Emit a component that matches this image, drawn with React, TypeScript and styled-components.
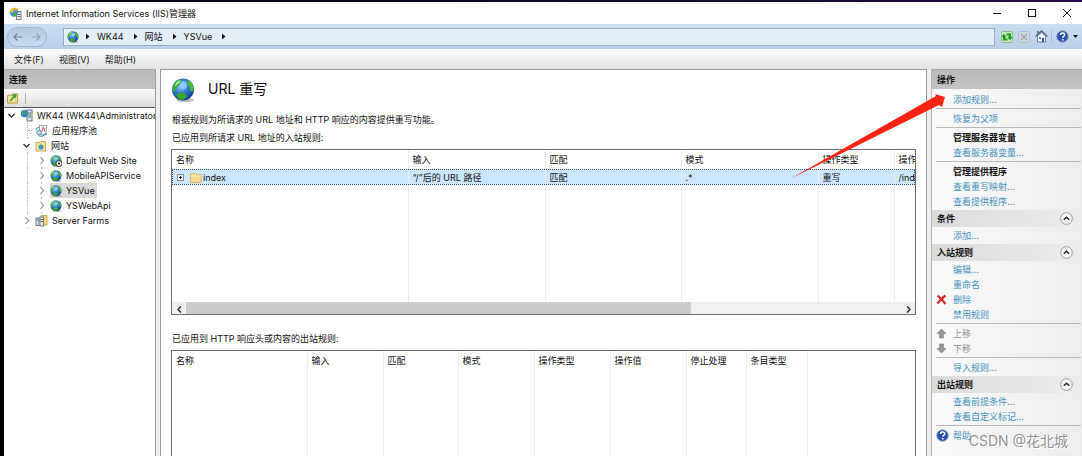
import React from 'react';
import styled, { createGlobalStyle, css } from 'styled-components';

const GlobalStyle = createGlobalStyle`
  *, *::before, *::after { box-sizing: border-box; }
  html, body, #root { height: 100%; }
  body {
    margin: 0;
    overflow: hidden;
    color: #111;
    font: 9px/15px Inter, "Noto Sans CJK SC", sans-serif;
  }
  button, input {
    margin: 0;
    padding: 0;
    border: 0;
    background: none;
    color: inherit;
    font: inherit;
  }
  svg { display: block; flex: none; }
  ul { margin: 0; padding: 0; list-style: none; }
  h1, h2, h3, p { margin: 0; font: inherit; }
`;

const Desktop = styled.div`
  height: 100vh;
  padding: 2px 0 0 4px;
  background: linear-gradient(90deg, #05050c, #170b35 70%, #240a4a) top / 100% 2px no-repeat #000;
`;

const Window = styled.div`
  position: relative;
  display: flex;
  flex-direction: column;
  height: 100%;
  background: #f0eff0;
`;

const TitleBar = styled.header`
  display: flex;
  align-items: center;
  height: 22px;
  padding: 0 8px 0 5px;
  gap: 4px;
  background: #fff;
`;

const WindowTitle = styled.h1`
  flex: 1;
  font-size: 9px;
`;

const WindowButtons = styled.div`
  display: flex;
  gap: 21px;
`;

const IconButton = styled.button`
  display: flex;
  align-items: center;
  justify-content: center;
  flex: none;
  width: 14px;
  height: 14px;
`;

const AddressBar = styled.nav`
  display: flex;
  align-items: center;
  height: 25px;
  padding: 0 3px;
  background: linear-gradient(#cbdef1, #b9d0ea);
`;

const History = styled.div`
  display: flex;
  align-items: center;
  justify-content: space-between;
  width: 40px;
  height: 20px;
  padding: 0 3px;
  border: 1px solid #a3b7cc;
  border-radius: 10px;
  background: linear-gradient(#b3c8de, #cadbed);
`;

const Crumbs = styled.div`
  display: flex;
  align-items: center;
  flex: 1;
  height: 18px;
  margin: 0 5px 0 16px;
  padding: 0 3px;
  border: 1px solid #98aec4;
  background: #e4eef9;
`;

const CrumbRoot = styled.button`
  padding-right: 6px;
`;

const Crumb = styled.button`
  padding: 0 9px 0 7px;
`;

const BarTools = styled.div`
  display: flex;
  align-items: center;
  gap: 3px;
`;

const ToolDivider = styled.span`
  width: 1px;
  height: 14px;
  background: #a9bfd6;
`;

const MenuBar = styled.nav`
  display: flex;
  align-items: center;
  height: 20px;
  padding: 0 10px;
  gap: 15px;
  background: linear-gradient(#fdfdfd, #e3e2e3);
`;

const Workspace = styled.div`
  display: flex;
  flex: 1;
  min-height: 0;
  gap: 4px;
`;

const SidePanel = styled.aside<{ $side: 'left' | 'right' }>`
  flex: none;
  width: ${p => (p.$side === 'left' ? 152 : 151)}px;
  overflow: hidden;
  border-top: 1px solid #a9a8a9;
  ${p =>
    p.$side === 'left'
      ? css`
          border-right: 1px solid #9b9a9b;
          background: #fff;
        `
      : css`
          border-left: 1px solid #b5b4b5;
          background: linear-gradient(90deg, #fafafa, #eeedee);
        `}
`;

const PanelHeading = styled.h2`
  height: 19px;
  padding: 2px 5px;
  background: linear-gradient(#bab8b9, #c4c2c3);
  font-weight: 700;
`;

const TreeToolbar = styled.div`
  display: flex;
  align-items: center;
  height: 19px;
  padding: 0 2px;
  gap: 5px;
  border-bottom: 1px solid #55535c;
  background: linear-gradient(#fbfbfb, #dedddd);
`;

const ToolbarMark = styled.span`
  width: 1px;
  height: 11px;
  background: #b7b29e;
`;

const Tree = styled.ul`
  padding: 0;
`;

const guide = 'repeating-linear-gradient(#b5b5b5 0 1px, transparent 1px 2px)';

const TreeRow = styled.li<{ $depth: number }>`
  display: flex;
  align-items: center;
  height: 15px;
  padding-left: ${p => 3 + p.$depth * 15}px;
  gap: 3px;
  white-space: nowrap;
  background-image: ${p => (p.$depth === 0 ? 'none' : p.$depth === 1 ? guide : `${guide}, ${guide}`)};
  background-position: 23px 0, 37px 0;
  background-size: 1px 100%;
  background-repeat: no-repeat;
`;

const TreeToggle = styled.button`
  display: flex;
  align-items: center;
  flex: none;
  width: 10px;
  height: 11px;
  background: #fff;
`;

const TreeSpacer = styled.span`
  flex: none;
  width: 4px;
  height: 1px;
  margin-left: 6px;
  border-top: 1px dotted #999;
`;

const TreeLabel = styled.button<{ $selected?: boolean }>`
  display: flex;
  align-items: center;
  padding-right: 2px;
  gap: 4px;
  background: ${p => (p.$selected ? '#d9d9d9' : 'none')};
`;

const Main = styled.main`
  display: flex;
  flex-direction: column;
  flex: 1;
  min-width: 0;
  padding: 8px 10px 0;
  border: 1px solid #9b9a9b;
  border-bottom: 0;
  background: #fff;
`;

const PageHeading = styled.div`
  display: flex;
  align-items: center;
  height: 24px;
  margin-bottom: 10px;
  gap: 13px;
`;

const PageTitle = styled.h2`
  padding-bottom: 2px;
  font-size: 14px;
  line-height: 20px;
`;

const Note = styled.p`
  margin-bottom: 3px;
  padding-left: 1px;
`;

const ListLabel = styled.h3<{ $spaced?: boolean }>`
  margin: ${p => (p.$spaced ? 16 : 0)}px 0 4px;
  padding-left: 1px;
`;

const ListFrame = styled.div<{ $grow?: boolean }>`
  overflow: hidden;
  flex: ${p => (p.$grow ? '1' : 'none')};
  border: 1px solid #6c6b6d;
  ${p => p.$grow && 'border-bottom: 0;'}
`;

const Grid = styled.table`
  width: 100%;
  border-collapse: collapse;
  table-layout: fixed;
  th, td {
    padding: 0 4px;
    border-right: 1px solid #e6eff2;
    font-weight: 400;
    text-align: left;
    white-space: nowrap;
    overflow: hidden;
  }
  th:last-child, td:last-child { border-right: 0; }
  th { height: 19px; }
`;

const SelectedRow = styled.tr`
  height: 16px;
  background: #cce7fd;
  outline: 1px dotted #3f5262;
  outline-offset: -1px;
`;

const NameCell = styled.div`
  display: flex;
  align-items: center;
  gap: 1px;
`;

const ExpandButton = styled(IconButton)`
  width: 9px;
  margin-right: 4px;
`;

const Filler = styled.tr<{ $height: number }>`
  height: ${p => p.$height}px;
`;

const ScrollBar = styled.div`
  display: flex;
  height: 12px;
  background: #f0f0f0;
`;

const ScrollThumb = styled.div`
  flex: 12;
  background: #cbcbcb;
`;

const ScrollTrack = styled.div`
  flex: 5;
`;

const ActionsBody = styled.div`
  padding-top: 3px;
`;

const ActionRow = styled.div`
  display: flex;
  align-items: center;
  height: 15px;
  padding-left: 4px;
`;

const ActionIcon = styled.span`
  flex: none;
  width: 17px;
`;

const ActionLink = styled.a<{ $disabled?: boolean }>`
  color: ${p => (p.$disabled ? '#939393' : '#3c93bd')};
  text-decoration: none;
`;

const ActionCaption = styled.h3`
  font-weight: 700;
`;

const Rule = styled.hr`
  height: 1px;
  margin: 1px 1px 2px 4px;
  border: 0;
  background: #b9b8b9;
`;

const SectionHeading = styled.div`
  display: flex;
  align-items: center;
  justify-content: space-between;
  height: 17px;
  margin: 1px 0;
  padding: 0 9px 0 5px;
  background: linear-gradient(90deg, #dcdbdc, #ededed);
  h3 { font-weight: 700; }
`;

const Pointer = styled.svg`
  position: absolute;
  top: 90px;
  right: 132px;
  pointer-events: none;
`;

const Watermark = styled.div`
  position: absolute;
  right: 14px;
  bottom: 5px;
  color: rgba(120, 120, 120, 0.8);
  font-size: 14px;
  line-height: 20px;
  text-shadow: 1px 1px 0 #fff;
  pointer-events: none;
`;

const Globe = ({ size = 12, children }: { size?: number; children?: React.ReactNode }) => (
  <svg width={size} height={size} viewBox="0 0 24 24" aria-hidden="true">
    <defs>
      <radialGradient id="sea" cx="40%" cy="35%" r="70%">
        <stop offset="0" stopColor="#8fd0fa" />
        <stop offset="0.45" stopColor="#2f7fd6" />
        <stop offset="1" stopColor="#123a86" />
      </radialGradient>
    </defs>
    <ellipse cx="14" cy="22" rx="9" ry="2" fill="#888" opacity="0.5" />
    <circle cx="12" cy="11.5" r="11" fill="url(#sea)" />
    <path d="M1.500 11C1.500 6 5 2 9 1.200L11.500 2 9 4 8.500 7 6 8.500 5 11.500 3 14z" fill="#3fae35" />
    <path d="M17 2c3.500 1.500 5.500 5 5.800 9L21 14l-2-2-.5-3.500L16 6.500z" fill="#46b93a" />
    <path d="M5.500 16l4.500-1.500 5 1.500 1 2.500-3 3-4 .5-3-3z" fill="#3aa52f" />
    <path d="M5 5l3-2.500 2 .5-3 3-3 2z" fill="#b4ea8c" />
    <ellipse cx="13" cy="7" rx="3" ry="4" fill="#c9ecff" opacity="0.5" />
    {children}
  </svg>
);

const ServerIcon = () => (
  <svg width="13" height="13" viewBox="0 0 13 13" aria-hidden="true">
    <rect x="7" y="1" width="5" height="11" fill="#dfe4ea" stroke="#6b7684" />
    <path d="M8 4h3M8 6h3M8 8h3" stroke="#5a6573" />
    <circle cx="4.5" cy="4.5" r="3.7" fill="#2f83d6" />
    <path d="M1.500 3.500 4 1l1 2-2 3zM5 5l3-1-1 3z" fill="#45b03a" />
  </svg>
);

const AppIcon = () => (
  <svg width="13" height="13" viewBox="0 0 13 13" aria-hidden="true">
    <rect x="7.500" y="4.500" width="4.500" height="8" fill="#e4e6e8" stroke="#7b8590" />
    <path d="M8.500 7.500h3M8.500 9.500h3" stroke="#66707c" />
    <circle cx="5" cy="5.500" r="4.200" fill="#3b92dd" />
    <path d="M.5 4.500 3 1l3-.5L5 4 3 6z" fill="#f4c430" />
    <path d="M6 .8 9.500 2 8 4 5.500 3z" fill="#e7a51c" />
    <path d="M4 7l4-2-1 4-2 .5z" fill="#49a83c" />
  </svg>
);

const PoolIcon = () => (
  <svg width="13" height="13" viewBox="0 0 13 13" aria-hidden="true">
    <rect x="4.500" y="1.500" width="7" height="9" fill="#eef2f6" stroke="#a3adb8" />
    <path d="M6.500 8 8.500 3 10 7.500" fill="none" stroke="#d5473f" />
    <path d="M1 6c.5-2 2.500-3 4-2.500M11 9c-1 3-5 4-8 2.500" fill="none" stroke="#5f93c8" strokeWidth="1.200" />
    <circle cx="4" cy="8.500" r="2.300" fill="#bcd7ee" stroke="#6d8fb0" />
  </svg>
);

const SitesIcon = () => (
  <svg width="12" height="12" viewBox="0 0 12 12" aria-hidden="true">
    <path d="M1 2.500h4l1-1h4.500V11H1z" fill="#f7e3a0" stroke="#cdaa55" />
    <circle cx="6" cy="7" r="2.600" fill="#3c8fd9" />
    <path d="M4 6l2-1.500.5 1.500L5 8zM6.500 7.500l1.500-.5-.5 1.500z" fill="#47b33a" />
  </svg>
);

const FarmIcon = () => (
  <svg width="13" height="13" viewBox="0 0 13 13" aria-hidden="true">
    <path d="M6 1.500h6v9.500H6z" fill="#f2d577" stroke="#cbaa55" />
    <rect x="1" y="4" width="3" height="7.500" fill="#dde2e7" stroke="#6e7883" />
    <rect x="5" y="3" width="3.500" height="9" fill="#e9ecef" stroke="#6e7883" />
    <path d="M1.500 6h2M5.500 5.500h2.500M5.500 7.500h2.500" stroke="#55606c" />
  </svg>
);

const FolderIcon = () => (
  <svg width="12" height="11" viewBox="0 0 12 11" aria-hidden="true">
    <path d="M.5 1.500H5l1 1h5v8H.5z" fill="#f8dc90" stroke="#dcb463" />
    <path d="M1 4h9.500" stroke="#fdf0c0" />
  </svg>
);

const NewLinkIcon = () => (
  <svg width="12" height="12" viewBox="0 0 12 12" aria-hidden="true">
    <path d="M.5 3.500 4 3l1-1h5.500V11H.5z" fill="#f3dc8a" stroke="#b99b4e" />
    <path d="M2.500 8.500 6 4.500 4.500 3.500 9.500 1.500 9 6.500 7.500 5.500 4 9.500z" fill="#3fa535" />
  </svg>
);

const Chevron = ({ open }: { open?: boolean }) => (
  <svg width="9" height="9" viewBox="0 0 9 9" fill="none" aria-hidden="true">
    {open ? (
      <path d="M1.500 3 4.500 6 7.500 3" stroke="#333" strokeWidth="1.300" />
    ) : (
      <path d="M3.500 1 6.500 4.500 3.500 8" stroke="#8a8a8a" strokeWidth="1.100" />
    )}
  </svg>
);

const CrumbArrow = () => (
  <svg width="5" height="7" viewBox="0 0 5 7" aria-hidden="true">
    <path d="M1 .5 4.500 3.500 1 6.500z" fill="#111" />
  </svg>
);

const HelpIcon = () => (
  <svg width="13" height="13" viewBox="0 0 13 13" aria-hidden="true">
    <circle cx="6.500" cy="6.500" r="5.800" fill="#2850b4" stroke="#9aa6bd" />
    <path d="M4.500 5c0-2.600 4.200-2.600 4.200-.2 0 1.500-2 1.500-2 3" fill="none" stroke="#fff" strokeWidth="1.500" />
    <rect x="5.900" y="9" width="1.600" height="1.500" fill="#fff" />
  </svg>
);

const CollapseIcon = () => (
  <svg width="13" height="13" viewBox="0 0 13 13" fill="none" aria-hidden="true">
    <circle cx="6.500" cy="6.500" r="5.800" fill="#f8f8f8" stroke="#9c9c9c" />
    <path d="M3.800 7.800 6.500 5.200 9.200 7.800" stroke="#222" strokeWidth="1.500" />
  </svg>
);

const DeleteIcon = () => (
  <svg width="11" height="11" viewBox="0 0 11 11" aria-hidden="true">
    <path d="M1.500 1.500C4 3.500 7 6.500 9.500 10M9.500 1.500C6.500 3.500 4 6.500 1.500 9.500" fill="none" stroke="#cf2a26" strokeWidth="2.200" />
  </svg>
);

const MoveIcon = ({ down }: { down?: boolean }) => (
  <svg width="11" height="11" viewBox="0 0 11 11" aria-hidden="true">
    <path d={down ? 'M3.500 1h4v4.500H10L5.500 10 1 5.500h2.500z' : 'M3.500 10h4V5.500H10L5.500 1 1 5.500h2.500z'} fill="#979797" stroke="#7d7d7d" strokeWidth="0.600" />
  </svg>
);

type Node = { label: string; depth: number; open?: boolean; leaf?: boolean; selected?: boolean; icon: React.ReactNode };

const nodes: Node[] = [
  { label: 'WK44 (WK44\\Administrator)', depth: 0, open: true, icon: <ServerIcon /> },
  { label: '应用程序池', depth: 1, leaf: true, icon: <PoolIcon /> },
  { label: '网站', depth: 1, open: true, icon: <SitesIcon /> },
  {
    label: 'Default Web Site',
    depth: 2,
    icon: (
      <Globe>
        <circle cx="18" cy="17" r="6" fill="#fff" stroke="#333" strokeWidth="2" />
        <rect x="16" y="15" width="4" height="4" fill="#222" />
      </Globe>
    ),
  },
  { label: 'MobileAPIService', depth: 2, icon: <Globe /> },
  { label: 'YSVue', depth: 2, selected: true, icon: <Globe /> },
  { label: 'YSWebApi', depth: 2, icon: <Globe /> },
  { label: 'Server Farms', depth: 1, icon: <FarmIcon /> },
];

const Action = ({ label, icon, disabled }: { label: string; icon?: React.ReactNode; disabled?: boolean }) => (
  <ActionRow>
    <ActionIcon>{icon}</ActionIcon>
    <ActionLink href="#" $disabled={disabled} aria-disabled={disabled}>
      {label}
    </ActionLink>
  </ActionRow>
);

const Caption = ({ label }: { label: string }) => (
  <ActionRow>
    <ActionIcon />
    <ActionCaption>{label}</ActionCaption>
  </ActionRow>
);

const Section = ({ label }: { label: string }) => (
  <SectionHeading>
    <h3>{label}</h3>
    <IconButton aria-label={`折叠 ${label}`}>
      <CollapseIcon />
    </IconButton>
  </SectionHeading>
);

const inboundColumns: [string, number][] = [
  ['名称', 236],
  ['输入', 137],
  ['匹配', 136],
  ['模式', 137],
  ['操作类型', 76],
];
const outboundColumns: [string, number][] = [
  ['名称', 135],
  ['输入', 76],
  ['匹配', 75],
  ['模式', 76],
  ['操作类型', 76],
  ['操作值', 76],
  ['停止处理', 60],
  ['条目类型', 61],
];

export default function App() {
  return (
    <Desktop>
      <GlobalStyle />
      <Window>
        <TitleBar>
          <AppIcon />
          <WindowTitle>Internet Information Services (IIS)管理器</WindowTitle>
          <WindowButtons>
            <IconButton aria-label="最小化">
              <svg width="10" height="10" viewBox="0 0 10 10"><path d="M1 5.500h8" stroke="#111" /></svg>
            </IconButton>
            <IconButton aria-label="最大化">
              <svg width="10" height="10" viewBox="0 0 10 10"><rect x="1.500" y="1.500" width="7" height="7" fill="none" stroke="#111" /></svg>
            </IconButton>
            <IconButton aria-label="关闭">
              <svg width="10" height="10" viewBox="0 0 10 10"><path d="M1 1l8 8M9 1 1 9" stroke="#111" /></svg>
            </IconButton>
          </WindowButtons>
        </TitleBar>

        <AddressBar aria-label="地址">
          <History>
            <IconButton aria-label="后退">
              <svg width="10" height="10" viewBox="0 0 10 10"><path d="M9.500 5H1M4.500 1.500 1 5l3.500 3.500" fill="none" stroke="#6f7f8f" strokeWidth="1.200" /></svg>
            </IconButton>
            <IconButton aria-label="前进">
              <svg width="10" height="10" viewBox="0 0 10 10"><path d="M.5 5H9M5.500 1.500 9 5 5.500 8.500" fill="none" stroke="#8fa0b1" strokeWidth="1.200" /></svg>
            </IconButton>
          </History>
          <Crumbs>
            <CrumbRoot aria-label="起始页">
              <Globe />
            </CrumbRoot>
            <CrumbArrow />
            <Crumb>WK44</Crumb>
            <CrumbArrow />
            <Crumb>网站</Crumb>
            <CrumbArrow />
            <Crumb>YSVue</Crumb>
            <CrumbArrow />
          </Crumbs>
          <BarTools>
            <IconButton aria-label="刷新">
              <svg width="12" height="12" viewBox="0 0 12 12">
                <rect x="0.500" y="0.500" width="11" height="11" rx="1" fill="#c9e8c0" stroke="#8fb88a" />
                <path d="M.5 6 3 2.800 5.500 6H4.200v1.500h2.300v2H2V6zM11.500 6 9 9.200 6.500 6h1.300V4.500H5.500v-2H10V6z" fill="#169a1c" />
              </svg>
            </IconButton>
            <IconButton aria-label="停止">
              <svg width="12" height="12" viewBox="0 0 12 12">
                <rect x="0.500" y="0.500" width="11" height="11" rx="1" fill="#cfd6dd" stroke="#b4bec8" />
                <path d="M3 3l6 6M9 3 3 9" stroke="#a2acb6" strokeWidth="1.500" />
              </svg>
            </IconButton>
            <IconButton aria-label="主页">
              <svg width="13" height="13" viewBox="0 0 13 13">
                <path d="M2.500 6v6h8V6L6.500 2.500z" fill="#f3f6fa" stroke="#6b7f9c" />
                <path d="M.5 6.500 6.500 1l6 5.500" fill="none" stroke="#4d6384" strokeWidth="1.300" />
                <path d="M3 1v3" stroke="#4d6384" strokeWidth="1.500" />
                <rect x="7" y="8" width="2" height="4" fill="#3c5a91" />
                <rect x="4" y="7" width="2" height="2" fill="#5e86c4" />
              </svg>
            </IconButton>
            <ToolDivider />
            <IconButton aria-label="帮助">
              <HelpIcon />
            </IconButton>
            <svg width="7" height="5" viewBox="0 0 7 5" aria-hidden="true"><path d="M1 1h5L3.500 4z" fill="#111" /></svg>
          </BarTools>
        </AddressBar>

        <MenuBar aria-label="菜单">
          <button>文件(F)</button>
          <button>视图(V)</button>
          <button>帮助(H)</button>
        </MenuBar>

        <Workspace>
          <SidePanel $side="left">
            <PanelHeading>连接</PanelHeading>
            <TreeToolbar>
              <IconButton aria-label="新建连接">
                <NewLinkIcon />
              </IconButton>
              <ToolbarMark />
            </TreeToolbar>
            <Tree>
              {nodes.map(n => (
                <TreeRow key={n.label} $depth={n.depth}>
                  {n.leaf ? (
                    <TreeSpacer />
                  ) : (
                    <TreeToggle aria-label={n.label} aria-expanded={!!n.open}>
                      <Chevron open={n.open} />
                    </TreeToggle>
                  )}
                  <TreeLabel $selected={n.selected}>
                    {n.icon}
                    {n.label}
                  </TreeLabel>
                </TreeRow>
              ))}
            </Tree>
          </SidePanel>

          <Main>
            <PageHeading>
              <Globe size={24} />
              <PageTitle>URL 重写</PageTitle>
            </PageHeading>
            <Note>根据规则为所请求的 URL 地址和 HTTP 响应的内容提供重写功能。</Note>
            <ListLabel>已应用到所请求 URL 地址的入站规则:</ListLabel>
            <ListFrame>
              <Grid>
                <colgroup>
                  {inboundColumns.map(([label, width]) => (
                    <col key={label} width={width} />
                  ))}
                  <col />
                </colgroup>
                <thead>
                  <tr>
                    {inboundColumns.map(([label]) => (
                      <th key={label}>{label}</th>
                    ))}
                    <th>操作值</th>
                  </tr>
                </thead>
                <tbody>
                  <SelectedRow>
                    <td>
                      <NameCell>
                        <ExpandButton aria-label="展开 index">
                          <svg width="7" height="7" viewBox="0 0 7 7">
                            <rect x="0.500" y="0.500" width="6" height="6" fill="#fff" stroke="#8b8b8b" />
                            <path d="M2 3.500h3M3.500 2v3" stroke="#222" />
                          </svg>
                        </ExpandButton>
                        <FolderIcon />
                        index
                      </NameCell>
                    </td>
                    <td>“/”后的 URL 路径</td>
                    <td>匹配</td>
                    <td>.*</td>
                    <td>重写</td>
                    <td>/index.html</td>
                  </SelectedRow>
                  <Filler $height={117}>
                    <td /><td /><td /><td /><td /><td />
                  </Filler>
                </tbody>
              </Grid>
              <ScrollBar>
                <IconButton aria-label="向左滚动">
                  <svg width="7" height="7" viewBox="0 0 7 7"><path d="M5 .5 2 3.500 5 6.500" fill="none" stroke="#222" strokeWidth="1.300" /></svg>
                </IconButton>
                <ScrollThumb />
                <ScrollTrack />
                <IconButton aria-label="向右滚动">
                  <svg width="7" height="7" viewBox="0 0 7 7"><path d="M2 .5 5 3.500 2 6.500" fill="none" stroke="#222" strokeWidth="1.300" /></svg>
                </IconButton>
              </ScrollBar>
            </ListFrame>
            <ListLabel $spaced>已应用到 HTTP 响应头或内容的出站规则:</ListLabel>
            <ListFrame $grow>
              <Grid>
                <colgroup>
                  {outboundColumns.map(([label, width]) => (
                    <col key={label} width={width} />
                  ))}
                  <col />
                </colgroup>
                <thead>
                  <tr>
                    {outboundColumns.map(([label]) => (
                      <th key={label}>{label}</th>
                    ))}
                    <th aria-hidden="true" />
                  </tr>
                </thead>
                <tbody>
                  <Filler $height={400}>
                    <td /><td /><td /><td /><td /><td /><td /><td /><td />
                  </Filler>
                </tbody>
              </Grid>
            </ListFrame>
          </Main>

          <SidePanel $side="right">
            <PanelHeading>操作</PanelHeading>
            <ActionsBody>
              <Action label="添加规则..." />
              <Rule />
              <Action label="恢复为父项" />
              <Rule />
              <Caption label="管理服务器变量" />
              <Action label="查看服务器变量..." />
              <Rule />
              <Caption label="管理提供程序" />
              <Action label="查看重写映射..." />
              <Action label="查看提供程序..." />
              <Section label="条件" />
              <Action label="添加..." />
              <Section label="入站规则" />
              <Action label="编辑..." />
              <Action label="重命名" />
              <Action label="删除" icon={<DeleteIcon />} />
              <Action label="禁用规则" />
              <Rule />
              <Action label="上移" icon={<MoveIcon />} disabled />
              <Action label="下移" icon={<MoveIcon down />} disabled />
              <Rule />
              <Action label="导入规则..." />
              <Section label="出站规则" />
              <Action label="查看前提条件..." />
              <Action label="查看自定义标记..." />
              <Rule />
              <Action label="帮助" icon={<HelpIcon />} />
            </ActionsBody>
          </SidePanel>
        </Workspace>

        <Pointer width="160" height="92" viewBox="0 0 160 92" aria-hidden="true">
          <path d="M0 87 146 4 145 2 155 5 152 15 149 13z" fill="#fb2414" />
        </Pointer>
        <Watermark>CSDN @花北城</Watermark>
      </Window>
    </Desktop>
  );
}
